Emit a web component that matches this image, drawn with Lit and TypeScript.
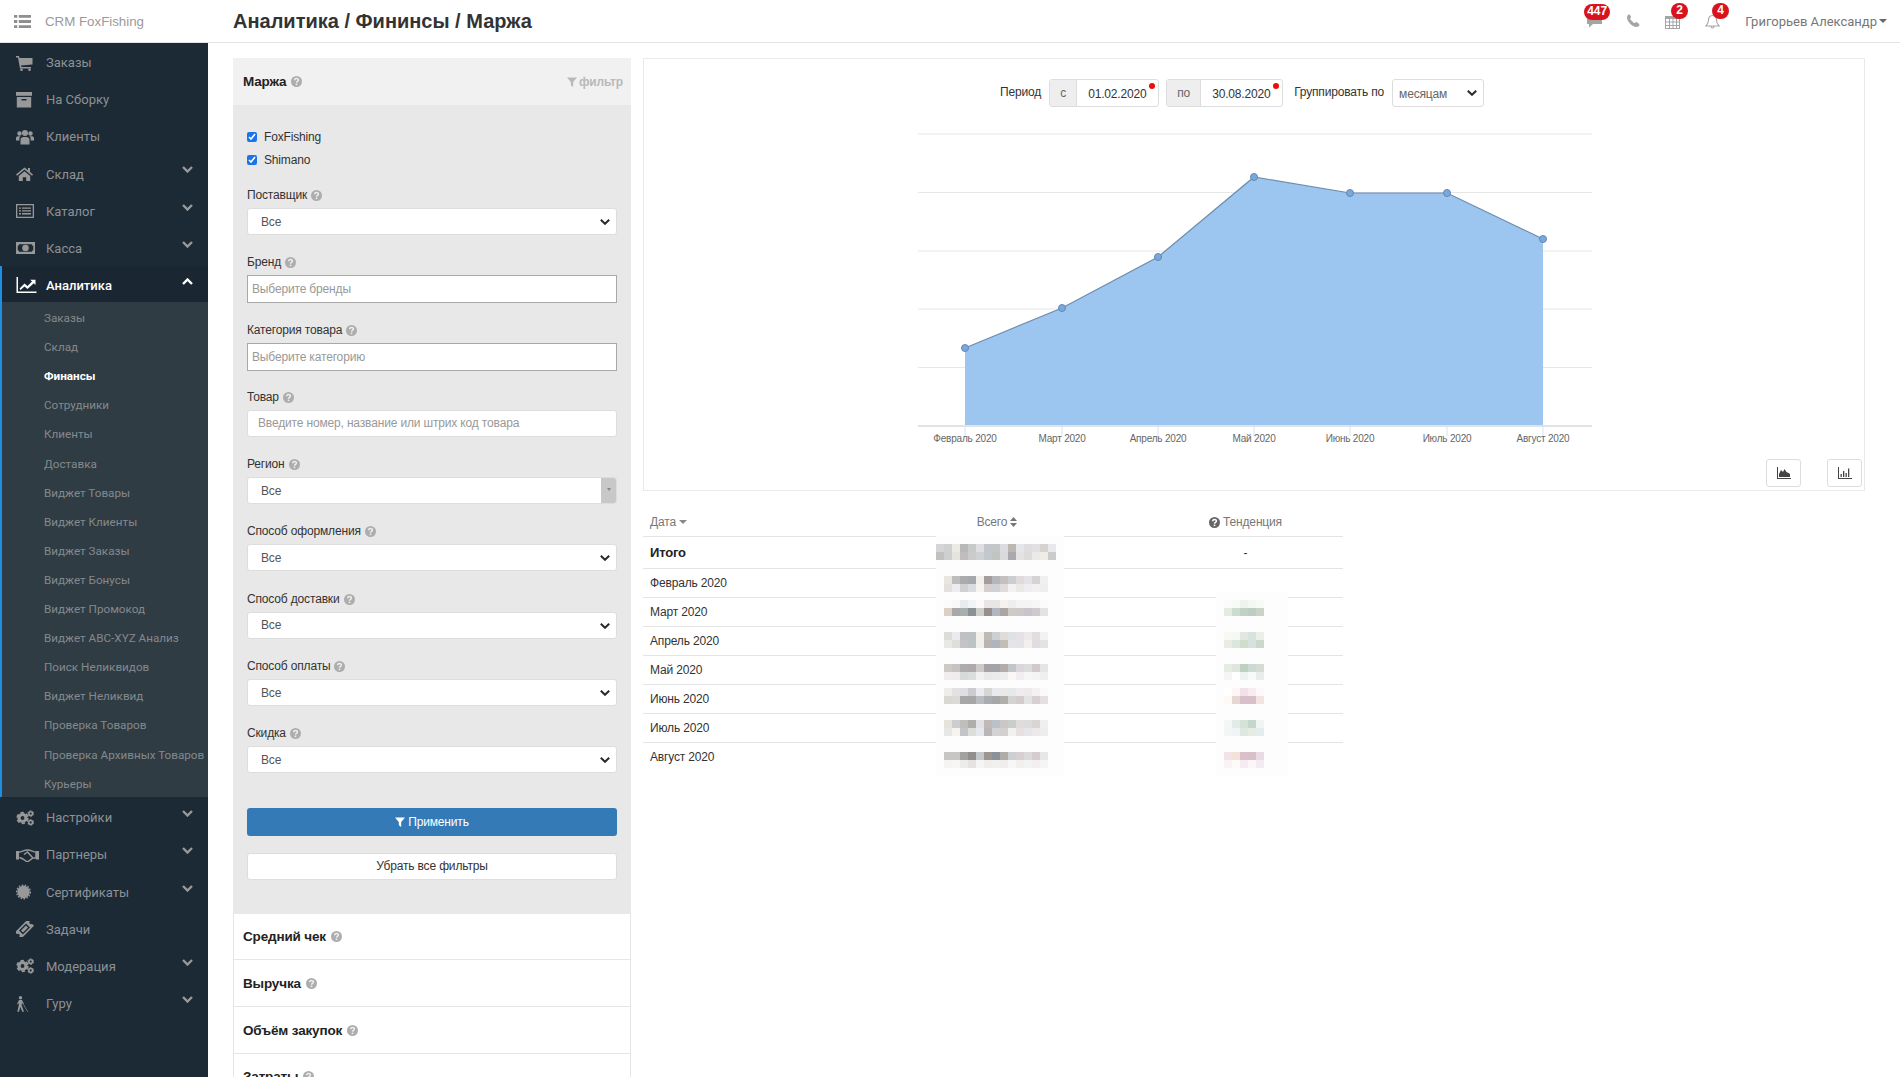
import { LitElement, html, css, svg } from "lit";
import { customElement } from "lit/decorators.js";

const gear = (cx: number, cy: number, r: number) => svg`
  <circle cx=${cx} cy=${cy} r=${r * 0.62} fill="none" stroke="currentColor" stroke-width=${r * 0.55}></circle>
  <circle cx=${cx} cy=${cy} r=${r * 0.95} fill="none" stroke="currentColor" stroke-width=${r * 0.3} stroke-dasharray=${`${r * 0.6} ${r * 0.4}`}></circle>`;

const I: Record<string, any> = {
  cart: svg`<path d="M0 1h3l.5 2H16.500v6.500L5 10.500l.3 1.500H15v1.500H4L2 2.500H0z"/><circle cx="5.500" cy="14.800" r="1.300"/><circle cx="13.500" cy="14.800" r="1.300"/>`,
  archive: svg`<path d="M0 0h16v3.800H0z"/><path fill-rule="evenodd" d="M.800 5h14.400v10.500H.800zM5.500 7v1.500h5V7z"/>`,
  users: svg`<circle cx="9" cy="4" r="3"/><circle cx="3.500" cy="4.500" r="2.200"/><circle cx="14.500" cy="4.500" r="2.200"/><path d="M4.500 15.500V11c0-2 1.500-3 3-3h3c1.500 0 3 1 3 3v4.500z"/><path d="M0 11.500V9c0-1 1-1.800 2-1.800h2.500C3.500 8.200 3.300 9.500 3.300 11.500z"/><path d="M18 11.500V9c0-1-1-1.800-2-1.800h-2.500c1 1 1.200 2.300 1.200 4.300z"/>`,
  home: svg`<path d="M8.500 1.500 0 8.500l1 1.200 7.500-6.200L16 9.700l1-1.200-3-2.500V2h-2v2.300z"/><path d="M2.800 10 8.500 5.200 14.200 10v5h-4v-3.800H6.800V15h-4z"/>`,
  list: svg`<path fill-rule="evenodd" d="M0 1h18v14H0zM1.300 2.300v11.400h15.400V2.300zM3 4.500h2v1.300H3zM6 4.500h9v1.300H6zM3 7.300h2v1.300H3zM6 7.300h9v1.300H6zM3 10.100h2v1.300H3zM6 10.100h9v1.300H6z"/>`,
  money: svg`<path fill-rule="evenodd" d="M0 2h19v12H0zM3 4.200c0 1-.8 1.600-1.300 1.600v4.400c.8 0 1.300.7 1.300 1.600h13c0-.9.600-1.600 1.300-1.600V5.800c-.7 0-1.300-.6-1.300-1.600z"/><circle cx="9.500" cy="8" r="3.300"/>`,
  chart: svg`<path d="M.500 0H2v14.500h18.500V16H.500z"/><path d="m3.500 11.500 5-5 3 2.500L16 4.500l-1.800-1.700H19.500V8l-1.700-1.700-6.300 5.800-3-2.600-4 3.600z"/>`,
  cogs: svg`${gear(6.5, 8, 5.6)}${gear(14.7, 3.6, 3)}${gear(14.7, 12.4, 3)}`,
  hands: svg`<path d="M0 3h3v8.500H0zM20 3h3v8.500h-3z"/><path fill="none" stroke="currentColor" stroke-width="1.500" d="M3 4c3 0 4.500-2 8.500-2s5.500 2 8.500 2v6h-3l-5 3.500c-1 .6-2 0-5-2.500L3.500 9.500M8 6.500l3.500-2.500 5 5.500"/>`,
  cert: svg`<circle cx="7.500" cy="8" r="6.200"/><circle cx="7.500" cy="8" r="6.800" fill="none" stroke="currentColor" stroke-width="1.400" stroke-dasharray="1.600 1.400"/>`,
  ticket: svg`<g transform="rotate(-45 8.500 8)"><path fill-rule="evenodd" d="M-.500 3.500h18v3c-1 0-1.500.6-1.500 1.500s.5 1.500 1.500 1.500v3h-18v-3c1 0 1.500-.6 1.500-1.500S.500 6.500-.500 6.500zM3.500 5.200v5.600h10V5.200z"/><path d="M5 6.500h7v3H5z"/></g>`,
  blind: svg`<circle cx="4.500" cy="1.800" r="1.700"/><path d="M3 4h3l2 4-1 .6L5.800 6.500v3l2.200 6.300H6.300L4.300 11 3 15.800H1.300L2.800 9V6.500L2 8.500l-1-.5z"/><path d="m7.300 8.800.5-.3 4.200 7.300-.5.2z"/>`,
};

const ico = (n: string, w = 18, h = 16, vb = `0 0 ${w} ${h}`) =>
  html`<svg class="ic" width=${w} height=${h} viewBox=${vb} fill="currentColor">${I[n]}</svg>`;

const chevron = (up = false) => html`<svg class="chev" width="11" height="7" viewBox="0 0 11 7"><path fill="none" stroke="currentColor" stroke-width="2.400" d=${up ? "M1 6l4.500-4.500L10 6" : "M1 1l4.500 4.500L10 1"}/></svg>`;

const q = () => html`<svg class="q" width="11" height="11" viewBox="0 0 11 11"><circle cx="5.500" cy="5.500" r="5.500" fill="#adadad"/><path fill="none" stroke="#eee" stroke-width="1.500" d="M3.700 4.300c0-2.300 3.700-2.300 3.700-.2 0 1.300-1.900 1.300-1.900 2.700"/><rect x="4.700" y="7.600" width="1.600" height="1.500" fill="#eee"/></svg>`;

const funnel = (c: string, s = 11) => html`<svg width=${s} height=${s} viewBox="0 0 11 11" style="color:${c}"><path fill="currentColor" d="M0 .5h11L6.800 5.500V11L4.200 9V5.500z"/></svg>`;

const selectBox = (cls: string, label: string) => html`<div class="sw">
  <select class=${cls}><option>${label}</option></select>
  <svg class="sa" width="10" height="6" viewBox="0 0 10 6"><path fill="none" stroke="#2a2a2a" stroke-width="2" d="M.8.800 5 4.800 9.200.800"/></svg>
</div>`;

const mainTop = [
  { t: "Заказы", i: "cart" }, { t: "На Сборку", i: "archive" }, { t: "Клиенты", i: "users" },
  { t: "Склад", i: "home", c: 1 }, { t: "Каталог", i: "list", c: 1 }, { t: "Касса", i: "money", c: 1 },
];
const subs = ["Заказы", "Склад", "Финансы", "Сотрудники", "Клиенты", "Доставка", "Виджет Товары", "Виджет Клиенты", "Виджет Заказы", "Виджет Бонусы", "Виджет Промокод", "Виджет ABC-XYZ Анализ", "Поиск Неликвидов", "Виджет Неликвид", "Проверка Товаров", "Проверка Архивных Товаров", "Курьеры"];
const mainBottom = [
  { t: "Настройки", i: "cogs", c: 1 }, { t: "Партнеры", i: "hands", c: 1 }, { t: "Сертификаты", i: "cert", c: 1 },
  { t: "Задачи", i: "ticket" }, { t: "Модерация", i: "cogs", c: 1 }, { t: "Гуру", i: "blind", c: 1 },
];

const fields: [string, string][] = [
  ["Поставщик", "select"], ["Бренд", "Выберите бренды"], ["Категория товара", "Выберите категорию"],
  ["Товар", "Введите номер, название или штрих код товара"], ["Регион", "s2"], ["Способ оформления", "select"],
  ["Способ доставки", "select"], ["Способ оплаты", "select"], ["Скидка", "select"],
];

const rows = [
  { d: "Итого", bold: true, off: 8, lead: 0, trend: "-",
    m: ["d5d5d8,cfd0d2,ecebe3,b9b8b8,c8cac8,dedfe0,c4c6cc,c5c6c8,dcdce0,bdb7b2,e4e6ec,dfdde0,e2e0e4,d6d2d2,e9e9ec", "c3c1c0,ced0cf,e5e5dd,c1bdbe,cbcbcc,d0d1d4,c2c8cb,c2c4c2,dadadc,a9a9ae,e6e2e2,dddcda,eceae8,efece8,cdcacd"] },
  { d: "Февраль 2020", off: 8, lead: 8,
    m: ["e9e5df,bdbcbe,a9abad,a5a9ac,f3efea,a39e9d,b3b6bd,c5c0bf,cccdd0,e0dadc,e3e2e6,d6d3d5,f0f0f0", "e4e0de,eeecee,d0d0d3,dadde0,f6f3f0,d5d0cf,cfd1d6,e0dcdc,f3f2f0,ece8e8,efedef,f2f0f2,eeeeee"] },
  { d: "Март 2020", off: 3, lead: 8,
    m: ["fdfbfa,f8f8f8,eaebed,f2f3f5,fbfaf9,e7e5e5,e6e6e6,f5f2f0,eeeef1,f5f3f4,f4f3f5,f7f5f6,fbfbfb", "dccfc5,a9a7aa,a9aeae,8a9296,cfcecb,968f8c,b1b7c0,aca6a2,cdcbc8,cdc8c9,c8c4c9,cecbcd,e5e2e3"],
    t: ["fbfcf9,f8faf6,eef3ef,f4f7f4,f8faf6", "e6ebe2,ccdcd0,c0d2c5,bccdc4,cad3c8"] },
  { d: "Апрель 2020", off: 6, lead: 8,
    m: ["dcdcda,e9ebee,bfc0c2,bcc1c3,f3f0ec,c0bab7,cbd0d5,e0dcd9,dfe1e4,e5e1e4,ebe9ea,e1dee0,f3f2f3", "e8e8e4,e0dedc,c4c4c8,bcc2c6,f1efec,bab4b0,b0b4be,c2beb6,e5e5e7,e5e3e7,f2f0ee,e0dde0,e4e2e4"],
    t: ["f7f9f5,f6f8f3,e2e7e1,d8e3e0,eaefe9", "e8ece5,dbe6dc,cfdecc,d5e2de,cbd8cc"] },
  { d: "Май 2020", off: 9, lead: 8,
    m: ["ccc9c6,c6c3c4,adadae,aeaaaa,cdcbca,a5a3a5,a3a4a8,b3adaa,c3c6c8,dbd6da,dcdcdc,d0c9ce,e6e4e6", "efeded,eeecec,d7d9da,dcdedd,f3f1f0,e9e9ea,ebebec,efedec,f9f8f6,f0eef0,f7f6f6,f5f3f5,efefef"],
    t: ["e6ece4,dfe6de,bdd1c0,cddad3,d5dcd4", "f3f6f2,ffffff,eef3f2,f8faf9,e9ecea"] },
  { d: "Июнь 2020", off: 4, lead: 8,
    m: ["efecec,e4e1e3,dfdfe1,ccccd0,e9ebee,d6d6d4,e7e9ec,ebe9e8,e6e8e9,f0ecee,eeeaec,f3f1f2,fafafa", "dbd7d3,dcdad7,a8a7a8,a6a6a6,b9bdc2,a9acb0,a6a7ab,b2aeaa,d3d3d2,d3ccce,e4e3e3,d6d0d4,e3dfe2"],
    t: ["ffffff,fdf5f6,f2e2e7,f8ecf0,fdf8f9", "fdf9f7,e8d6d5,d9bfc9,d9bfca,f3e4e4"] },
  { d: "Июль 2020", off: 7, lead: 8,
    m: ["e6e2dc,cdccce,bfbebb,afaead,e1e2e6,bfb9b7,bcc0c8,cac7c4,c9cecc,e0dcdc,dddcdc,d8d6d3,f0efef", "e7e7e7,f5f4ee,c3c4c9,deded9,e6e8ed,b9b7b6,d3d3d3,d3d1cf,f1f1ef,e5e1e2,e6e5e7,ebe9ea,eeedee"],
    t: ["f4f7f5,e1ebe7,d5e3d6,c5d7cb,f0f4f3", "f3f6f6,eff5f7,dde8e0,e7ece3,e4ecee"] },
  { d: "Август 2020", off: 10, lead: 8,
    m: ["c9c5c3,c8c5c5,a3a2a2,918e8d,c5c8cb,9b9691,8b9198,b1aca5,cdd0d3,d7d0d2,dbd9da,d6ccd0,e9e6e8", "f6f4f2,f8f6f5,eeeceb,e4e2e2,f5f5f5,f0edeb,f2f0ef,f0eeec,f7f7f7,f3efef,f4f3f3,f3eff1,f6f5f5"],
    t: ["f2e4e6,f2e2d8,dcbfc8,d9bfc9,e8dce2", "f9f3f6,fdfbfa,f5ebf1,fbf7f8,f3ebf2"] },
];

const mosaic = (m: string[], lead: number) => html`<div class="mos" style="padding-left:${lead}px">
  ${m.map((r) => html`<div class="mos-r">${r.split(",").map((c) => html`<i style="background:#${c}"></i>`)}</div>`)}
</div>`;

const pts: [number, number][] = [[965, 348], [1062, 308], [1158, 257], [1254, 177], [1350, 193], [1447, 193], [1543, 239]];
const months = ["Февраль 2020", "Март 2020", "Апрель 2020", "Май 2020", "Июнь 2020", "Июль 2020", "Август 2020"];
const grid = [134, 192.500, 251, 309, 367.500];

@customElement("app-root")
export class AppRoot extends LitElement {
  static styles = css`
    :host { display: grid; grid-template-columns: 208px 1fr; grid-template-rows: 43px 1fr; height: 100vh; overflow: hidden; font-family: "Liberation Sans", Arial, sans-serif; font-size: 12px; letter-spacing: -.16px; color: #333; background: #fff; }
    * { box-sizing: border-box; }
    svg { display: block; flex: none; }
    .top { grid-column: 1 / 3; display: flex; align-items: center; border-bottom: 1px solid #e3e3e3; background: #fff; letter-spacing: 0; }
    .brand { width: 233px; display: flex; align-items: center; gap: 14px; padding-left: 14px; color: #9a9a9a; font-size: 13.300px; }
    .title { font-size: 20px; font-weight: 700; color: #333; }
    .tools { margin-left: auto; display: flex; align-items: center; color: #9b9b9b; padding-right: 13px; }
    .t-i { position: relative; display: block; }
    .t-i svg { color: #a5a5a5; }
    .bdg { position: absolute; background: #d9131e; color: #fff; font: 700 12px/15px "Liberation Sans", sans-serif; border-radius: 8px; height: 16px; min-width: 17px; text-align: center; padding: 0 2px; }
    .user { margin-left: 25px; font: 13px Roboto, sans-serif; color: #777; display: flex; align-items: center; gap: 2px; }
    .caret { width: 0; height: 0; border: 4px solid transparent; border-top-color: #666; border-bottom: 0; }

    .side { background: #1c2a36; position: relative; color: #8d9193; font-family: Roboto, sans-serif; letter-spacing: 0; }
    .it { height: 37.170px; display: flex; align-items: center; font-size: 13px; padding-top: 2px; position: relative; }
    .it .ico { width: 46px; padding-left: 16px; color: #989898; }
    .it .chev { position: absolute; left: 182px; top: 12px; color: #999; }
    .it.act { color: #fff; font-weight: 500; background: #1a2732; box-shadow: inset 2px 0 0 #1d90e3; height: 36.170px; }
    .it.act .ico, .it.act .chev { color: #fff; }
    .sub { background: #2f3c44; box-shadow: inset 2px 0 0 #1d90e3; padding: 0; }
    .sub div { height: 29.100px; line-height: 32px; padding-left: 44px; font-size: 11.700px; color: #85898c; white-space: nowrap; }
    .sub div.on { color: #fff; font-weight: 700; }
    .bottom { padding-top: 1.500px; }

    .main { display: flex; gap: 12px; padding: 15px 35px 0 25px; align-items: flex-start; min-width: 0; }
    .panel { width: 398px; flex: none; }
    .p-h { height: 47px; background: #f1f1f1; display: flex; align-items: center; padding: 0 8px 0 10px; font-size: 13.500px; font-weight: 700; color: #222; gap: 5px; }
    .p-h .f { margin-left: auto; display: flex; align-items: center; gap: 2px; color: #b9b9b9; font-size: 12px; }
    .p-b { background: #e8e8e8; padding: 20px 14px 34px; }
    .ck { display: flex; align-items: center; gap: 7px; height: 23px; color: #333; }
    .ck input { margin: 0; width: 10px; height: 10px; accent-color: #1a73e8; }
    .cks { margin-bottom: 18px; }
    .fld { height: 67.300px; }
    .fld label { display: flex; align-items: center; gap: 4px; height: 13px; margin-bottom: 6px; color: #333; line-height: 13px; }
    select, input[type="text"] { font: 12px "Liberation Sans", sans-serif; letter-spacing: -.16px; width: 100%; display: block; background: #fff; outline: none; }
    .sw { position: relative; }
    .sa { position: absolute; right: 7px; top: 11px; pointer-events: none; }
    select { appearance: none; -webkit-appearance: none; }
    .sel { height: 27px; border: 1px solid #ddd; border-radius: 3px; padding: 0 13px; color: #555; }
    .inp { height: 28px; border: 1px solid #a8a8a8; padding: 0 4px; }
    .inp2 { height: 27px; border: 1px solid #ddd; border-radius: 3px; padding: 0 10px; }
    input::placeholder { color: #999; opacity: 1; }
    .s2 { height: 27px; display: flex; border: 1px solid #ddd; border-radius: 3px; background: #fff; color: #555; align-items: center; padding-left: 13px; position: relative; overflow: hidden; }
    .s2 b { position: absolute; right: 0; top: 0; bottom: 0; width: 15px; background: #c8c8c8; display: flex; justify-content: center; padding-top: 10px; }
    .s2 b::after { content: ""; border: 2.500px solid transparent; border-top: 3px solid #888; border-bottom: 0; height: 0; }
    .btn { display: flex; align-items: center; justify-content: center; border-radius: 3px; font-size: 12px; }
    .apply { height: 28px; margin-top: 13px; background: #337ab7; color: #fff; gap: 3px; }
    .clear { height: 27px; margin-top: 17px; background: #fff; border: 1px solid #ddd; color: #333; }
    .row { height: 46.800px; border: 1px solid #e6e6e6; border-top: 0; display: flex; align-items: center; gap: 5px; padding-left: 9px; font-size: 13.500px; font-weight: 700; color: #222; }

    .right { flex: 1; min-width: 0; }
    .card { height: 433px; border: 1px solid #e9e9e9; }
    .bar { display: flex; align-items: center; height: 28px; margin-top: 20px; padding-left: 356px; gap: 8px; color: #333; }
    .bar span.l { position: relative; top: -1px; }
    .dg { display: flex; height: 28px; border: 1px solid #ddd; border-radius: 3px; position: relative; }
    .dg .a { background: #eee; border-right: 1px solid #ddd; color: #666; display: flex; align-items: center; justify-content: center; }
    .dg .v { flex: 1; display: flex; align-items: center; padding: 1px 0 0 11px; color: #333; }
    .dot { position: absolute; right: 3px; top: 3px; width: 6px; height: 6px; border-radius: 50%; background: #ee0b0b; }
    .gsel { width: 92px; height: 28px; border: 1px solid #ddd; border-radius: 3px; padding: 2px 6px 0; color: #666; font-size: 12px; }
    .gs { width: 92px; }
    .plot { display: block; margin-top: 1px; }
    .plot text { font: 10px "Liberation Sans", sans-serif; fill: #666; text-anchor: middle; letter-spacing: -.2px; }
    .cbtns { display: flex; justify-content: flex-end; gap: 26px; padding-right: 2px; margin-top: 11px; }
    .cbtn { width: 35px; height: 28px; border: 1px solid #ddd; border-radius: 3px; display: flex; align-items: center; justify-content: center; color: #444; }

    .tbl { width: 700px; margin-top: 17px; }
    .tr { display: grid; grid-template-columns: 203px 302px 195px; height: 29px; border-bottom: 1px solid #e4e4e4; }
    .tr:last-child { border-bottom: 0; }
    .tr.h { height: 29px; color: #777; align-items: center; text-align: center; }
    .tr.h > div { display: flex; align-items: center; justify-content: center; gap: 3px; }
    .tr.h > div:first-child { justify-content: flex-start; padding-left: 7px; }
    .tr.tot { height: 32px; }
    .c1 { padding-left: 7px; line-height: 29px; color: #333; }
    .tot .c1 { font-weight: 700; font-size: 13px; line-height: 31px; color: #222; }
    .c2 { padding-left: 90px; }
    .c3 { padding-left: 68px; position: relative; }
    .band { background: #fdfdfd; width: 128px; height: 32px; padding-top: 8px; position: relative; }
    .c3 .band { width: 72px; }
    .mos { display: block; }
    .mos-r { display: flex; height: 8px; }
    .mos-r i { display: block; width: 8px; height: 8px; flex: none; }
    .dash { position: absolute; left: 0; right: 0; text-align: center; top: 0; line-height: 33px; color: #333; }
  `;

  render() {
    return html`
      <header class="top">
        <div class="brand">
          <svg width="17" height="13" viewBox="0 0 17 13" fill="#8f8f8f"><path d="M0 0h3.300v2.800H0zM4.800 0H17v2.800H4.800zM0 5.100h3.300v2.800H0zM4.800 5.100H17v2.800H4.800zM0 10.200h3.300V13H0zM4.800 10.200H17V13H4.800z"/></svg>
          <span>CRM FoxFishing</span>
        </div>
        <div class="title">Аналитика / Фининсы / Маржа</div>
        <div class="tools">
          <div class="t-i" style="margin-right:23px">
            <svg width="17" height="14" viewBox="0 0 17 14" fill="currentColor"><path d="M1 1h15v9H7l-4 3.500V10H1z"/></svg>
            <span class="bdg" style="left:-2px;top:-10px;width:26px">447</span>
          </div>
          <div class="t-i" style="margin-right:25px">
            <svg width="14" height="14" viewBox="0 0 14 14" fill="currentColor"><path d="M13.500 10.700c0 .2 0 .4-.1.6-.2.6-1.500 1.700-3 1.700C6.200 13 1 7.800 1 3.600c0-1.500 1.100-2.800 1.700-3 .2-.1.4-.1.6-.1.100 0 .2 0 .3.100.3.100.9 1.300 1.500 2.500.1.200-.9 1.200-1 1.600 0 .6 3.500 4.100 4.500 4.400.4-.1 1.400-1.200 1.600-1 1.200.6 2.400 1.200 2.500 1.500.1.100.1.200.1.300z"/></svg>
          </div>
          <div class="t-i" style="margin-right:25px">
            <svg width="15" height="15" viewBox="0 0 15 15" fill="currentColor"><path fill-rule="evenodd" d="M0 2h15v13H0zM1 5v2.500h3V5zm4 0v2.500h2.500V5zm3.500 0v2.500H11V5zM12 5v2.500h2V5zM1 8.500V11h3V8.500zm4 0V11h2.500V8.500zm3.500 0V11H11V8.500zm3.500 0V11h2V8.500zM1 12v2h3v-2zm4 0v2h2.500v-2zm3.500 0v2H11v-2zm3.500 0v2h2v-2z"/></svg>
            <span class="bdg" style="left:6px;top:-11px">2</span>
          </div>
          <div class="t-i">
            <svg width="15" height="15" viewBox="0 0 15 15"><path fill="none" stroke="currentColor" stroke-width="1.100" d="M7.500 1.500c2.700 0 4 2 4 4.500 0 3 1 4.500 2.500 6H1c1.500-1.500 2.500-3 2.500-6 0-2.500 1.300-4.500 4-4.500zM6 12.500c0 2 3 2 3 0"/></svg>
            <span class="bdg" style="left:7px;top:-11px">4</span>
          </div>
          <div class="user">Григорьев Александр<span class="caret"></span></div>
        </div>
      </header>

      <nav class="side">
        ${mainTop.map((m) => this.item(m))}
        <div class="it act"><span class="ico">${ico("chart", 21, 16, "0 0 21 16")}</span>Аналитика${chevron(true)}</div>
        <div class="sub">${subs.map((s) => html`<div class=${s === "Финансы" ? "on" : ""}>${s}</div>`)}</div>
        <div class="bottom">${mainBottom.map((m) => this.item(m))}</div>
      </nav>

      <main class="main">
        <section class="panel">
          <div class="p-h">Маржа ${q()}<span class="f">${funnel("#b9b9b9", 10)}фильтр</span></div>
          <div class="p-b">
            <div class="cks">
              <label class="ck"><input type="checkbox" checked />FoxFishing</label>
              <label class="ck"><input type="checkbox" checked />Shimano</label>
            </div>
            ${fields.map(([l, k]) => html`<div class="fld">
              <label>${l} ${q()}</label>
              ${k === "select"
                ? selectBox("sel", "Все")
                : k === "s2"
                ? html`<div class="s2">Все<b></b></div>`
                : l === "Товар"
                ? html`<input type="text" class="inp2" placeholder=${k} />`
                : html`<input type="text" class="inp" placeholder=${k} />`}
            </div>`)}
            <div class="btn apply">${funnel("#fff", 10)}Применить</div>
            <div class="btn clear">Убрать все фильтры</div>
          </div>
          <div class="row">Средний чек ${q()}</div>
          <div class="row">Выручка ${q()}</div>
          <div class="row">Объём закупок ${q()}</div>
          <div class="row">Затраты ${q()}</div>
        </section>

        <section class="right">
          <div class="card">
            <div class="bar">
              <span class="l">Период</span>
              <div class="dg" style="width:110px"><div class="a" style="width:27px">с</div><div class="v">01.02.2020</div><i class="dot"></i></div>
              <div class="dg" style="width:117px;margin-left:-1px"><div class="a" style="width:34px">по</div><div class="v">30.08.2020</div><i class="dot"></i></div>
              <span class="l" style="margin-left:3px">Группировать по</span>
              <div class="gs">${selectBox("gsel", "месяцам")}</div>
            </div>
            <svg class="plot" width="1220" height="340" viewBox="644 108 1220 340">
              ${grid.map((y) => svg`<line x1="918" x2="1592" y1=${y} y2=${y} stroke="#e6e6e6"/>`)}
              <path fill="#9cc6ef" d="M965 426L${pts.map((p) => p.join(" ")).join("L")}L1543 426Z"/>
              <polyline fill="none" stroke="#6c8cad" stroke-width="1.200" points=${pts.map((p) => p.join(",")).join(" ")}/>
              <line x1="918" x2="1592" y1="426" y2="426" stroke="#dde3e6" stroke-width="2"/>
              ${pts.map((p) => svg`<line x1=${p[0]} x2=${p[0]} y1="425" y2="436" stroke="#d6e4ef"/>`)}
              ${pts.map((p) => svg`<circle cx=${p[0]} cy=${p[1]} r="3.500" fill="#7aa8dc" stroke="#6288b2"/>`)}
              ${pts.map((p, i) => svg`<text x=${p[0]} y="442">${months[i]}</text>`)}
            </svg>
            <div class="cbtns">
              <div class="cbtn"><svg width="14" height="12" viewBox="0 0 14 12" fill="currentColor"><path d="M0 0h1v11h13v1H0z"/><path d="M2 10V7l2-4 2 2 1.500-3 2 3 2 1 1.500 1v3z"/></svg></div>
              <div class="cbtn"><svg width="14" height="12" viewBox="0 0 14 12" fill="currentColor"><path d="M0 0h1v11h13v1H0zM2.500 7h1.300v3H2.500zM5 4h1.300v6H5zM7.500 6h1.300v4H7.500zM10 1.500h1.300V10H10z"/></svg></div>
            </div>
          </div>

          <div class="tbl">
            <div class="tr h">
              <div>Дата <span class="caret" style="border-top-color:#888"></span></div>
              <div>Всего
                <svg width="7" height="10" viewBox="0 0 7 10" fill="#777"><path d="M3.500 0 7 4H0zM3.500 10 0 6h7z"/></svg></div>
              <div><svg width="11" height="11" viewBox="0 0 11 11"><circle cx="5.500" cy="5.500" r="5.500" fill="#666"/><path fill="none" stroke="#fff" stroke-width="1.500" d="M3.700 4.300c0-2.300 3.700-2.300 3.700-.2 0 1.300-1.900 1.300-1.900 2.700"/><rect x="4.700" y="7.600" width="1.600" height="1.500" fill="#fff"/></svg>Тенденция</div>
            </div>
            ${rows.map((r) => html`<div class="tr ${r.bold ? "tot" : ""}">
              <div class="c1">${r.d}</div>
              <div class="c2"><div class="band" style="margin-top:${r.off - 9}px">${mosaic(r.m, r.lead)}</div></div>
              <div class="c3">
                ${r.trend ? html`<div class="dash">-</div>` : ""}
                ${r.t ? html`<div class="band" style="margin-top:${r.off - 9}px">${mosaic(r.t, 8)}</div>` : ""}
              </div>
            </div>`)}
          </div>
        </section>
      </main>
    `;
  }

  item(m: { t: string; i: string; c?: number }) {
    const dims: Record<string, [number, number]> = { hands: [23, 14], chart: [21, 16], money: [19, 16] };
    const [w, h] = dims[m.i] ?? [18, 16];
    return html`<div class="it"><span class="ico">${ico(m.i, w, h)}</span>${m.t}${m.c ? chevron() : ""}</div>`;
  }
}
